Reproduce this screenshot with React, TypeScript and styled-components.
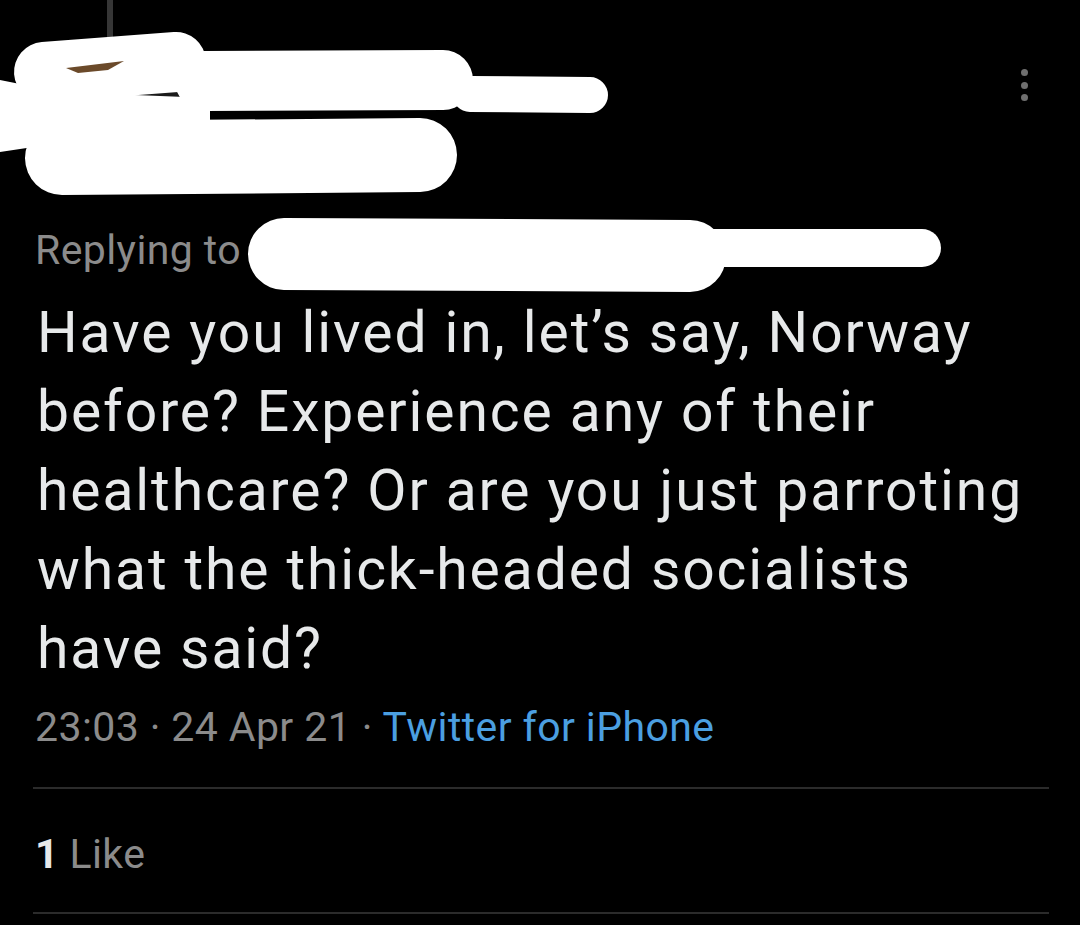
import React from "react";
import styled, { createGlobalStyle } from "styled-components";

const GlobalStyle = createGlobalStyle`
  html, body {
    margin: 0;
    padding: 0;
    background: #000;
  }
  body {
    font-family: Roboto, "Noto Sans", "Liberation Sans", sans-serif;
  }
`;

const Page = styled.div`
  width: 1080px;
  height: 925px;
  background: #000;
  overflow: hidden;
  display: flex;
  flex-direction: column;
  font-family: Roboto, "Noto Sans", "Liberation Sans", sans-serif;
`;

const Header = styled.header`
  position: relative;
  height: 205px;
  padding: 0 52px 0 40px;
  display: flex;
  align-items: flex-start;
  box-sizing: border-box;
`;

const AvatarColumn = styled.div`
  width: 140px;
  display: flex;
  flex-direction: column;
  align-items: center;
`;

const ThreadLine = styled.div`
  width: 6px;
  height: 38px;
  background: #363636;
`;

const Avatar = styled.div`
  width: 140px;
  height: 140px;
  border-radius: 50%;
  background: #1a1a1a;
`;

const NameBlock = styled.div`
  flex: 1;
  margin-left: 22px;
  padding-top: 58px;
  display: flex;
  flex-direction: column;
  gap: 34px;
`;

const DisplayName = styled.span`
  font-size: 34px;
  line-height: 40px;
  font-weight: 700;
  color: #e7e9ea;
`;

const UserHandle = styled.span`
  font-size: 32px;
  line-height: 40px;
  color: #8b8b8b;
`;

const MoreButton = styled.div`
  padding-top: 69px;
  display: flex;
  flex-direction: column;
  gap: 5.5px;
`;

const Dot = styled.span`
  width: 7px;
  height: 7px;
  border-radius: 50%;
  background: #6f6f6f;
`;

const Redaction = styled.svg<{ $top: number; $height: number }>`
  position: absolute;
  left: 0;
  top: ${(p) => p.$top}px;
  width: 1080px;
  height: ${(p) => p.$height}px;
  pointer-events: none;
`;

const Content = styled.div`
  padding: 0 33px 0 35px;
  display: flex;
  flex-direction: column;
`;

const ReplySection = styled.div`
  position: relative;
  margin: 21px -33px 0 -35px;
  padding: 0 33px 0 35px;
`;

const SecondaryText = styled.div`
  font-size: 41px;
  line-height: 48px;
  letter-spacing: 0.4px;
  color: #8b8b8b;
  white-space: nowrap;
`;

const Mention = styled.span`
  color: #4b9fe1;
`;

const TweetText = styled.p`
  margin: 19px 0 0 2px;
  font-size: 57px;
  line-height: 79px;
  letter-spacing: 1.9px;
  color: #e7e9ea;
`;

const Meta = styled(SecondaryText)`
  margin-top: 15px;
`;

const Source = styled.span`
  color: #4b9fe1;
`;

const Divider = styled.hr<{ $gap: number }>`
  margin: ${(p) => p.$gap}px -2px 0 -2px;
  border: none;
  height: 2px;
  background: #2b2b2b;
`;

const Stats = styled(SecondaryText)`
  margin-top: 41px;
`;

const Count = styled.b`
  color: #e7e9ea;
  font-weight: 700;
`;

const W = "#ffffff";

export default function App() {
  return (
    <>
      <GlobalStyle />
      <Page>
        <Header>
          <AvatarColumn>
            <ThreadLine />
            <Avatar />
          </AvatarColumn>
          <NameBlock>
            <DisplayName>Display Name</DisplayName>
            <UserHandle>@username</UserHandle>
          </NameBlock>
          <MoreButton aria-label="More">
            <Dot />
            <Dot />
            <Dot />
          </MoreButton>
          <Redaction $top={0} $height={205} viewBox="0 0 1080 205">
            <line x1="44" y1="72" x2="176" y2="62" stroke={W} strokeWidth="60" strokeLinecap="round" />
            <line x1="205" y1="81" x2="443" y2="80" stroke={W} strokeWidth="60" strokeLinecap="round" />
            <line x1="470" y1="94" x2="590" y2="95" stroke={W} strokeWidth="36" strokeLinecap="round" />
            <polygon points="0,80 60,92 210,98 210,135 60,143 0,152" fill={W} />
            <line x1="62" y1="158" x2="420" y2="155" stroke={W} strokeWidth="74" strokeLinecap="round" />
            <polygon points="66,68 124,61 108,70 78,73" fill="#6b4a2a" />
          </Redaction>
        </Header>
        <Content>
          <ReplySection>
            <SecondaryText>
              Replying to <Mention>@hidden_account_name</Mention>
            </SecondaryText>
            <Redaction $top={-26} $height={110} viewBox="0 200 1080 110">
              <line x1="284" y1="254" x2="690" y2="256" stroke={W} strokeWidth="72" strokeLinecap="round" />
              <line x1="700" y1="248" x2="922" y2="248" stroke={W} strokeWidth="38" strokeLinecap="round" />
              <circle cx="700" cy="258" r="17" fill={W} />
            </Redaction>
          </ReplySection>
          <TweetText>
            Have you lived in, let’s say, Norway before? Experience any of their healthcare? Or are you just parroting what the thick-headed socialists have said?
          </TweetText>
          <Meta>
            23:03 · 24 Apr 21 · <Source>Twitter for iPhone</Source>
          </Meta>
          <Divider $gap={36} />
          <Stats>
            <Count>1</Count> Like
          </Stats>
          <Divider $gap={34} />
        </Content>
      </Page>
    </>
  );
}
